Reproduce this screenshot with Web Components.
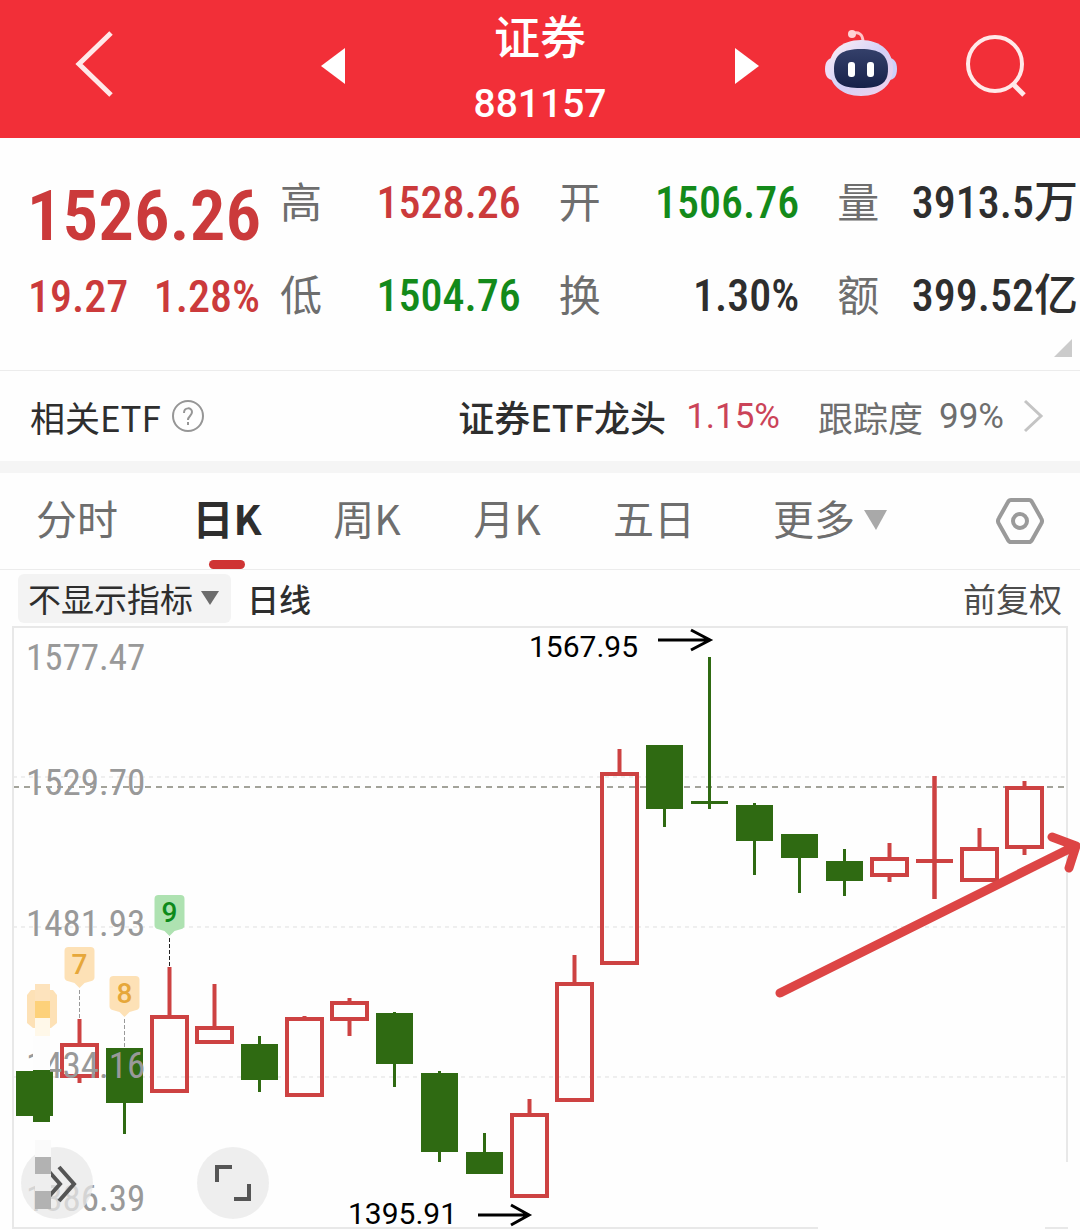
<!DOCTYPE html>
<html lang="zh-CN">
<head>
<meta charset="utf-8">
<meta name="viewport" content="width=device-width, initial-scale=1">
<title>证券 881157</title>
<style>
	body {
		margin: 0;
		background: #fefefe;
		color: #2e2e2e;
		font-family: "Noto Sans CJK SC", sans-serif;
		--font-number: "Roboto Condensed", Roboto, "Noto Sans CJK SC", sans-serif;
		--font-plain: Roboto, "Noto Sans CJK SC", sans-serif;
		--color-up: #cb3a3b;
		--color-down: #138a1a;
		--color-muted: #6e6e6e;
		--color-line: #ececec;
	}
</style>
</head>
<body>
<stock-header name="证券" code="881157"></stock-header>
<main>
	<quote-panel price="1526.26" change="19.27" percent="1.28%">
		<quote-item label="高" trend="up">1528.26</quote-item>
		<quote-item label="开" trend="down">1506.76</quote-item>
		<quote-item label="量">3913.5万</quote-item>
		<quote-item label="低" trend="down">1504.76</quote-item>
		<quote-item label="换">1.30%</quote-item>
		<quote-item label="额">399.52亿</quote-item>
	</quote-panel>
	<etf-row name="证券ETF龙头" percent="1.15%" tracking="99%">相关ETF</etf-row>
	<period-tabs selected="1"></period-tabs>
	<indicator-bar></indicator-bar>
	<candle-chart></candle-chart>
</main>

<script>
/**
 * Red bar at the top with navigation, stock name and code.
 *
 * @tag stock-header
 * @attribute {string} name - The stock name.
 * @attribute {string} code - The stock code.
 */
class StockHeader extends HTMLElement {
	connectedCallback() {
		const shadowRoot = this.attachShadow({ mode: "open" });
		shadowRoot.innerHTML = `
			<style>
				:host {
					display: block;
					background: #f22f38;
					color: #fff;
				}

				header {
					display: grid;
					grid-template-columns: 1fr 438px 1fr;
					grid-template-rows: 132px;
					align-items: center;
					padding-bottom: 6px;
				}

				button {
					display: block;
					padding: 0;
					border: 0;
					background: none;
					color: #ffe9e9;
				}

				svg {
					display: block;
				}

				.start {
					padding-left: 74px;
				}

				.center,
				.end {
					display: flex;
					align-items: center;
					justify-content: space-between;
				}

				.end {
					justify-content: flex-end;
					gap: 68px;
					padding-right: 53px;
				}

				.title {
					text-align: center;
				}

				h1 {
					margin: 0;
					font-size: 46px;
					font-weight: 500;
					line-height: 76px;
				}

				p {
					margin: 0;
					font: 500 39px/64px var(--font-plain);
				}
			</style>
			<header>
				<div class="start">
					<button aria-label="返回">
						<svg width="42" height="70" viewBox="0 0 42 70" fill="none" stroke="currentColor" stroke-width="5"><path d="M37 2 5 33l32 31"/></svg>
					</button>
				</div>
				<div class="center">
					<button aria-label="上一个">
						<svg width="24" height="36" viewBox="0 0 24 36" fill="#fff"><path d="M24 0v36L0 18z"/></svg>
					</button>
					<div class="title">
						<h1></h1>
						<p></p>
					</div>
					<button aria-label="下一个">
						<svg width="24" height="36" viewBox="0 0 24 36" fill="#fff"><path d="M0 0v36l24-18z"/></svg>
					</button>
				</div>
				<div class="end">
					<button aria-label="智能助手">
						<svg width="72" height="74" viewBox="0 4 72 74">
							<defs>
								<linearGradient id="shell" x1="0" y1="0" x2="1" y2="1">
									<stop offset="0" stop-color="#fff1f4"/>
									<stop offset=".5" stop-color="#d3d0f7"/>
									<stop offset="1" stop-color="#f3d3ea"/>
								</linearGradient>
								<linearGradient id="face" x1="0" y1="0" x2="0" y2="1">
									<stop offset="0" stop-color="#34406a"/>
									<stop offset="1" stop-color="#17214a"/>
								</linearGradient>
							</defs>
							<path d="M27 9c6-3 11 0 11 8" fill="none" stroke="#ffc4c8" stroke-width="3"/>
							<circle cx="27" cy="9" r="4" fill="#ffd3d6"/>
							<path d="M8 33c-5 0-8 4-8 11s3 11 8 11z" fill="#eeddf6"/>
							<path d="M64 33c5 0 8 4 8 11s-3 11-8 11z" fill="#cdd0fa"/>
							<path d="M36 15c20 0 32 12 32 28S56 71 36 71 4 59 4 43s12-28 32-28z" fill="url(#shell)"/>
							<path d="M36 24c19 0 27 6 27 20S56 63 36 63 9 58 9 44s8-20 27-20z" fill="url(#face)"/>
							<rect x="23" y="37" width="7" height="15" rx="3" fill="#fff"/>
							<rect x="42" y="37" width="7" height="15" rx="3" fill="#fff"/>
						</svg>
					</button>
					<button aria-label="搜索">
						<svg width="62" height="66" viewBox="0 0 62 66" fill="none" stroke="currentColor" stroke-width="4"><circle cx="30" cy="31" r="27"/><path d="m48 51 11 11" stroke-width="5"/></svg>
					</button>
				</div>
			</header>
		`;
		shadowRoot.querySelector("h1").textContent = this.getAttribute("name");
		shadowRoot.querySelector("p").textContent = this.getAttribute("code");
	}
}

/**
 * Latest price with a grid of further figures.
 *
 * @tag quote-panel
 * @slot - The quote items.
 * @attribute {string} price - The latest price.
 * @attribute {string} change - The change since the last close.
 * @attribute {string} percent - The change in percent.
 */
class QuotePanel extends HTMLElement {
	connectedCallback() {
		const shadowRoot = this.attachShadow({ mode: "open" });
		shadowRoot.innerHTML = `
			<style>
				:host {
					display: block;
					border-bottom: 1px solid var(--color-line);
				}

				section {
					display: grid;
					grid-template-columns: 232px 1fr;
					column-gap: 20px;
					padding: 15px 2px 0 28px;
				}

				.latest {
					color: var(--color-up);
					font-family: var(--font-number);
					font-weight: 500;
				}

				.latest div {
					display: flex;
					justify-content: space-between;
					align-items: center;
					box-sizing: border-box;
					height: 93px;
					padding-top: 8px;
					font-size: 44px;
				}

				.latest .price {
					justify-content: center;
					padding-top: 32px;
					font-size: 71px;
					font-weight: 600;
				}

				.items {
					display: grid;
					grid-template-columns: 1fr 1fr 1fr;
					column-gap: 38px;
				}

				footer {
					display: flex;
					justify-content: flex-end;
					padding: 0 8px 13px;
				}

				button {
					padding: 0;
					border: 0;
					background: none;
				}

				svg {
					display: block;
				}
			</style>
			<section>
				<div class="latest">
					<div class="price"></div>
					<div><span class="change"></span><span class="percent"></span></div>
				</div>
				<div class="items"><slot></slot></div>
			</section>
			<footer>
				<button aria-label="展开"><svg width="18" height="18" viewBox="0 0 18 18"><path d="M18 0v18H0z" fill="#cbcbcb"/></svg></button>
			</footer>
		`;
		for (const name of ["price", "change", "percent"]) {
			shadowRoot.querySelector(`.${name}`).textContent = this.getAttribute(name);
		}
	}
}

/**
 * One labelled figure.
 *
 * @tag quote-item
 * @slot - The value.
 * @attribute {string} label - The label.
 * @attribute {string} trend - "up" or "down" colours the value.
 */
class QuoteItem extends HTMLElement {
	connectedCallback() {
		const shadowRoot = this.attachShadow({ mode: "open" });
		shadowRoot.innerHTML = `
			<style>
				:host {
					display: flex;
					align-items: baseline;
					justify-content: space-between;
					height: 93px;
					line-height: 93px;
					white-space: nowrap;
				}

				.label {
					color: var(--color-muted);
					font-size: 42px;
				}

				.value {
					font: 500 44px/1 var(--font-number);
				}

				:host([trend="up"]) .value {
					color: var(--color-up);
				}

				:host([trend="down"]) .value {
					color: var(--color-down);
				}
			</style>
			<span class="label"></span>
			<span class="value"><slot></slot></span>
		`;
		shadowRoot.querySelector(".label").textContent = this.getAttribute("label");
	}
}

/**
 * Link to the related fund.
 *
 * @tag etf-row
 * @slot - The row title.
 */
class EtfRow extends HTMLElement {
	connectedCallback() {
		const shadowRoot = this.attachShadow({ mode: "open" });
		shadowRoot.innerHTML = `
			<style>
				:host {
					display: flex;
					align-items: center;
					justify-content: space-between;
					height: 90px;
					padding: 0 36px 0 30px;
					border-bottom: 12px solid #f5f5f5;
					font-size: 35px;
				}

				div,
				a {
					display: flex;
					align-items: center;
				}

				button {
					padding: 0;
					border: 0;
					margin-left: 10px;
					background: none;
				}

				svg {
					display: block;
				}

				a {
					color: var(--color-muted);
					text-decoration: none;
				}

				.name {
					color: #2e2e2e;
					font-size: 36px;
					font-weight: 500;
				}

				.percent {
					margin: 0 38px 0 20px;
					color: #cb4358;
					font-family: var(--font-plain);
				}

				.tracking {
					margin: 0 18px 0 16px;
					font-family: var(--font-plain);
				}
			</style>
			<div>
				<slot></slot>
				<button aria-label="说明">
					<svg width="34" height="34" viewBox="0 0 34 34" fill="none" stroke="#969696" stroke-width="2"><circle cx="17" cy="17" r="15"/><path d="M13 14c0-6 8-6 8-1 0 4-4 4-4 8M17 23v3"/></svg>
				</button>
			</div>
			<a href="#etf">
				<span class="name"></span>
				<span class="percent"></span>
				<span>跟踪度</span>
				<span class="tracking"></span>
				<svg width="22" height="36" viewBox="0 0 22 36" fill="none" stroke="#c4c4c4" stroke-width="3"><path d="m3 3 16 15L3 33"/></svg>
			</a>
		`;
		for (const name of ["name", "percent", "tracking"]) {
			shadowRoot.querySelector(`.${name}`).textContent = this.getAttribute(name);
		}
	}
}

/**
 * Tabs that choose the chart period.
 *
 * @tag period-tabs
 * @attribute {number} selected - The index of the selected tab.
 */
class PeriodTabs extends HTMLElement {
	static observedAttributes = ["selected"];

	connectedCallback() {
		const shadowRoot = this.attachShadow({ mode: "open" });
		shadowRoot.innerHTML = `
			<style>
				:host {
					display: block;
					border-bottom: 1px solid var(--color-line);
				}

				nav {
					display: grid;
					grid-template-columns: 154fr 146fr 134fr 146fr 148fr 204fr 148fr;
					height: 96px;
				}

				button {
					display: flex;
					flex-direction: column;
					align-items: center;
					justify-content: flex-end;
					gap: 12px;
					padding: 0;
					border: 0;
					background: none;
					color: var(--color-muted);
					font: 41px/62px "Noto Sans CJK SC", sans-serif;
				}

				button::after {
					content: "";
					width: 36px;
					height: 9px;
					border-radius: 5px;
				}

				button[aria-selected="true"] {
					color: #2e2e2e;
					font-weight: bold;
				}

				button[aria-selected="true"]::after {
					background: #cf3434;
				}

				.more span {
					display: flex;
					align-items: center;
					gap: 9px;
				}

				.more svg {
					padding-top: 6px;
				}

				.settings {
					justify-content: center;
					align-items: flex-end;
					padding-right: 36px;
				}

				.settings::after {
					content: none;
				}
			</style>
			<nav role="tablist">
				<button role="tab">分时</button>
				<button role="tab">日K</button>
				<button role="tab">周K</button>
				<button role="tab">月K</button>
				<button role="tab">五日</button>
				<button class="more" aria-haspopup="menu"><span>更多<svg width="23" height="20" viewBox="0 0 23 20" fill="#a9a9a9"><path d="M0 0h23L12 20z"/></svg></span></button>
				<button class="settings" aria-label="设置">
					<svg width="48" height="46" viewBox="0 0 48 46" fill="none" stroke="#9a9a9a" stroke-width="4" stroke-linejoin="round"><path d="M15 2h18q2 0 3 2l9 16q2 3 0 6l-9 16q-1 2-3 2H15q-2 0-3-2L3 26q-2-3 0-6l9-16q1-2 3-2z"/><circle cx="24" cy="23" r="7"/></svg>
				</button>
			</nav>
		`;
		this.tabs = shadowRoot.querySelectorAll("[role=tab]");
		this.tabs.forEach((tab, index) => {
			tab.addEventListener("click", () => this.setAttribute("selected", index));
		});
		this.updateTabs();
	}

	attributeChangedCallback() {
		this.updateTabs();
	}

	updateTabs() {
		if (!this.tabs) return;
		const selected = parseInt(this.getAttribute("selected"), 10) || 0;
		this.tabs.forEach((tab, index) => {
			tab.setAttribute("aria-selected", index === selected);
		});
	}
}

/**
 * Row above the chart: indicator, line type and price adjustment.
 *
 * @tag indicator-bar
 */
class IndicatorBar extends HTMLElement {
	connectedCallback() {
		const shadowRoot = this.attachShadow({ mode: "open" });
		shadowRoot.innerHTML = `
			<style>
				:host {
					display: flex;
					align-items: center;
					gap: 16px;
					height: 56px;
					padding: 0 18px;
					font-size: 33px;
				}

				label {
					display: grid;
					align-items: center;
					border-radius: 6px;
					background: #f3f3f3;
				}

				select,
				svg {
					grid-area: 1 / 1;
				}

				select {
					height: 49px;
					padding: 0 38px 0 10px;
					border: 0;
					appearance: none;
					background: none;
					color: #2e2e2e;
					font: inherit;
				}

				svg {
					justify-self: end;
					margin-right: 12px;
					pointer-events: none;
				}

				button {
					padding: 0;
					border: 0;
					margin-left: auto;
					background: none;
					color: #4c4c4c;
					font: inherit;
				}

				.line {
					font-size: 32px;
					font-weight: 500;
				}
			</style>
			<label>
				<select aria-label="指标"><option>不显示指标</option></select>
				<svg width="18" height="14" viewBox="0 0 18 14" fill="#6c6c6c"><path d="M0 0h18L9 14z"/></svg>
			</label>
			<span class="line">日线</span>
			<button>前复权</button>
		`;
	}
}

// high, body top, body bottom, low: measured down from the top of the plot
const CANDLES = [
	["down", 444, 444, 489, 489],
	["up", 392, 416, 451, 456],
	["down", 421, 421, 476, 507],
	["up", 340, 388, 466, 466],
	["up", 357, 399, 417, 417],
	["down", 409, 417, 453, 465],
	["up", 389, 390, 470, 470],
	["up", 371, 374, 394, 409],
	["down", 385, 386, 437, 460],
	["down", 444, 446, 525, 535],
	["down", 506, 525, 547, 547],
	["up", 472, 486, 571, 571],
	["up", 328, 355, 475, 475],
	["up", 122, 145, 338, 338],
	["down", 118, 118, 182, 200],
	["down", 30, 174, 177, 182],
	["down", 176, 178, 214, 248],
	["down", 207, 207, 231, 266],
	["down", 222, 234, 254, 269],
	["up", 216, 230, 250, 255],
	["up", 149, 232, 236, 272],
	["up", 201, 220, 255, 255],
	["up", 154, 159, 222, 228],
];

const AXIS_LABELS = [
	["1577.47", 43],
	["1529.70", 168],
	["1481.93", 309],
	["1434.16", 451],
	["1386.39", 584],
];

// candle index, text, top of the badge, end of its dashed line
const BADGES = [
	[1, "7", 320, 392, "soon"],
	[2, "8", 349, 421, "soon"],
	[3, "9", 268, 340, "done"],
];

/**
 * Daily candles with axis labels, extremes and a trend arrow.
 *
 * @tag candle-chart
 */
class CandleChart extends HTMLElement {
	connectedCallback() {
		const shadowRoot = this.attachShadow({ mode: "open" });
		shadowRoot.innerHTML = `
			<style>
				:host {
					display: block;
					position: relative;
				}

				svg {
					display: block;
					width: 100%;
					overflow: hidden;
				}

				.frame {
					fill: none;
					stroke: #e8e8e8;
					stroke-width: 2;
				}

				.grid {
					stroke: #dfdfdf;
					stroke-dasharray: 4 4;
				}

				.current {
					stroke: #a3a39a;
					stroke-width: 2;
					stroke-dasharray: 6 5;
				}

				.up {
					fill: none;
					stroke: #cd4242;
					stroke-width: 4;
				}

				.down {
					fill: #2f6a12;
					stroke: #2f6a12;
					stroke-width: 3;
				}

				.axis {
					fill: #999;
					font: 37px var(--font-number);
				}

				.extreme {
					font: 30px var(--font-plain);
					fill: #000;
				}

				.pointer {
					fill: none;
					stroke: #000;
					stroke-width: 3;
				}

				.trend {
					fill: none;
					stroke: #dd4545;
					stroke-width: 9;
					stroke-linecap: round;
					stroke-linejoin: round;
				}

				.soon {
					fill: #fde1b6;
					--badge-text: #e6a73a;
					--badge-line: #999;
				}

				.done {
					fill: #aee2b1;
					--badge-text: #0d8a1a;
					--badge-line: #222;
				}

				.badge text {
					fill: var(--badge-text);
					font: 500 28px var(--font-plain);
					text-anchor: middle;
				}

				.badge line {
					stroke: var(--badge-line);
					stroke-dasharray: 4 2;
				}

				button {
					position: absolute;
					bottom: 11px;
					display: grid;
					place-items: center;
					width: 72px;
					height: 72px;
					padding: 0;
					border: 0;
					border-radius: 50%;
					background: rgb(232 232 232 / 75%);
				}

				button svg {
					width: 40px;
					fill: none;
					stroke: #555;
					stroke-width: 4;
				}

				.more {
					left: 21px;
				}

				.expand {
					left: 197px;
				}

				.overlay {
					position: absolute;
					inset: 0;
					pointer-events: none;
				}
			</style>
			<svg viewBox="0 -1 1080 604" role="img" aria-label="日K线图">
				<line class="grid" x1="13" x2="1066" y1="150" y2="150"/>
				<line class="grid" x1="13" x2="1066" y1="300" y2="300"/>
				<line class="grid" x1="13" x2="1066" y1="450" y2="450"/>
				<line class="current" x1="13" x2="1066" y1="160" y2="160"/>
				<path class="frame" d="M1067 535V0H13v601h805M1045 601h23"/>
				${CANDLES.map(this.renderCandle, this).join("")}
				<path d="M31 363h22l4 5v28l-6 5H33l-6-5v-28z" fill="#fde1b6"/>
				${BADGES.map(this.renderBadge, this).join("")}
				${AXIS_LABELS.map(([text, y]) => `<text class="axis" x="26" y="${y}">${text}</text>`).join("")}
				<text class="extreme" x="529" y="30">1567.95</text>
				<path class="pointer" d="M658 13h52M691 3l19 10-19 10"/>
				<text class="extreme" x="348" y="597">1395.91</text>
				<path class="pointer" d="M478 588h51M511 578l18 10-18 10"/>
			</svg>
			<button class="more" aria-label="更多工具"><svg viewBox="0 0 40 40"><path d="M8 4l15 17L8 38M22 4l15 17-15 17"/></svg></button>
			<button class="expand" aria-label="全屏"><svg viewBox="0 0 40 40"><path d="M4 19V4h15M36 21v15H21"/></svg></button>
			<svg class="overlay" viewBox="0 -1 1080 604" aria-hidden="true">
				<path fill="#fde3bd" d="M35 357h15v17H35z"/>
				<path fill="#fdd17a" d="M35 374h15v17H35z"/>
				<path fill="#fff8e9" d="M35 391h15v18H35z"/>
				<path fill="#fdfdfd" d="M33 409h17v34H33z"/>
				<path fill="#2f6a12" d="M33 443h17v52H33z"/>
				<path fill="#fafafa" d="M35 513h16v17H35z"/>
				<path fill="#b2b2b2" d="M35 530h16v17H35z"/>
				<path fill="#eee" d="M35 547h16v17H35z"/>
				<path fill="#b2b2b2" d="M35 564h16v18H35z"/>
				<path class="trend" d="M780 366l295-147M1052 210l24 9-7 22"/>
			</svg>
		`;
	}

	candleX(index) {
		return 34.5 + index * 45;
	}

	renderCandle([trend, high, top, bottom, low], index) {
		const x = this.candleX(index);
		const stroke = trend === "up" ? 4 : 3;
		const half = trend === "up" ? 17.5 : 17;
		const height = Math.max(bottom - top - stroke, 0);
		const middle = top + stroke / 2;
		return `
			<g class="${trend}">
				<path d="M${x} ${high}V${top}M${x} ${bottom}V${low}"/>
				${height > 0
					? `<rect x="${x - half}" y="${middle}" width="${half * 2}" height="${height}"/>`
					: `<path d="M${x} ${high}V${low}M${x - 18.5} ${middle}h37"/>`}
			</g>
		`;
	}

	renderBadge([index, text, top, end, state]) {
		const x = this.candleX(index);
		return `
			<g class="badge ${state}">
				<path d="M${x - 11} ${top}h22q4 0 4 4v26q0 3-3 4l-7 2-5 5-5-5-7-2q-3-1-3-4v-26q0-4 4-4z"/>
				<text x="${x}" y="${top + 27}">${text}</text>
				<line x1="${x}" x2="${x}" y1="${top + 43}" y2="${end}"/>
			</g>
		`;
	}
}

customElements.define("stock-header", StockHeader);
customElements.define("quote-item", QuoteItem);
customElements.define("quote-panel", QuotePanel);
customElements.define("etf-row", EtfRow);
customElements.define("period-tabs", PeriodTabs);
customElements.define("indicator-bar", IndicatorBar);
customElements.define("candle-chart", CandleChart);
</script>
</body>
</html>
